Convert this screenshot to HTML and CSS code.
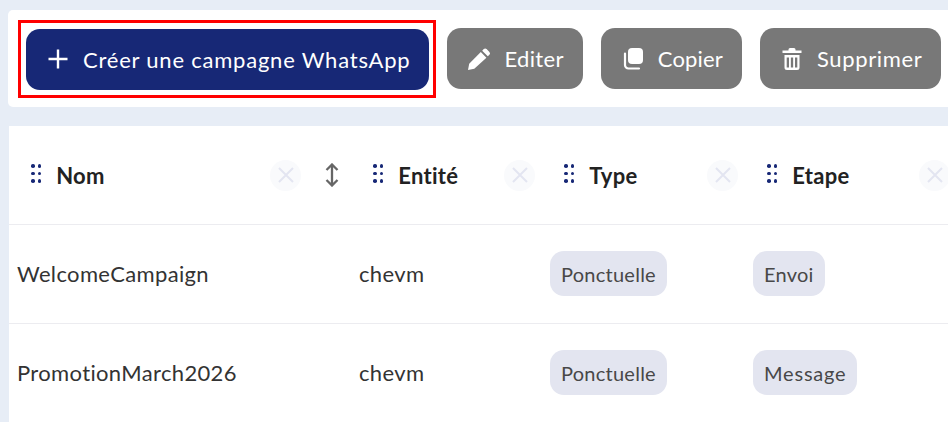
FILE: index.html
```html
<!DOCTYPE html>
<html lang="fr">
<head>
	<meta charset="UTF-8">
	<title>Campagnes WhatsApp</title>

	<link rel="stylesheet" href="styles.css">
</head>
<body>

	<div class="toolbar">
		<div class="highlight">
			<button class="btn btn-primary">
				<svg class="icon" viewBox="0 0 24 24"><path d="M12 2.500v19M2.500 12h19" fill="none" stroke="#fff" stroke-width="2.400"/></svg>
				Créer une campagne WhatsApp
			</button>
		</div>
		<button class="btn btn-edit">
			<svg class="icon" viewBox="0 0 24 24"><path d="M1 23l1.200-6.300L13.800 5.100l5.600 5.600L7.300 21.800zM15.200 3.700l1.600-1.600a2 2 0 0 1 2.800 0l2.800 2.800a2 2 0 0 1 0 2.800l-1.600 1.600z" fill="#fff"/></svg>
			Editer
		</button>
		<button class="btn btn-copy">
			<svg class="icon" viewBox="0 0 24 24"><path d="M11 1h7a4 4 0 0 1 4 4v8a4 4 0 0 1-4 4h-7a4 4 0 0 1-4-4V5a4 4 0 0 1 4-4z" fill="#fff"/><path d="M4 6.500V18a3.500 3.500 0 0 0 3.500 3.500H18" fill="none" stroke="#fff" stroke-width="2.200" stroke-linecap="round"/></svg>
			Copier
		</button>
		<button class="btn btn-delete">
			<svg class="icon" viewBox="0 0 24 24"><path d="M2.500 3.500h6V2.500a1.500 1.500 0 0 1 1.500-1.500h4a1.500 1.500 0 0 1 1.500 1.500v1h6v2.500h-19zM4.500 8h15v12.500a2.500 2.500 0 0 1-2.500 2.500H7a2.500 2.500 0 0 1-2.500-2.500zM6.700 10.500v10h2.300v-10zm4.150 0v10h2.300v-10zm4.150 0v10h2.300v-10z" fill="#fff" fill-rule="evenodd"/></svg>
			Supprimer
		</button>
	</div>

	<div class="table">
		<div class="row">
			<div class="th">
				<span class="grip"><i></i><i></i><i></i><i></i><i></i><i></i></span>
				<span class="th-label">Nom</span>
				<span class="close close-nom"><svg viewBox="0 0 16 16"><path d="M1 1l14 14M15 1L1 15" stroke="#e3e5f1" stroke-width="2" fill="none"/></svg></span>
				<svg class="sort" viewBox="0 0 14 24"><path d="M7 1.500v21M1.500 7 7 1.500 12.500 7M1.500 17 7 22.500 12.500 17" fill="none" stroke="#666" stroke-width="2.300"/></svg>
			</div>
			<div class="th">
				<span class="grip"><i></i><i></i><i></i><i></i><i></i><i></i></span>
				<span class="th-label">Entité</span>
				<span class="close"><svg viewBox="0 0 16 16"><path d="M1 1l14 14M15 1L1 15" stroke="#e3e5f1" stroke-width="2" fill="none"/></svg></span>
			</div>
			<div class="th">
				<span class="grip"><i></i><i></i><i></i><i></i><i></i><i></i></span>
				<span class="th-label">Type</span>
				<span class="close"><svg viewBox="0 0 16 16"><path d="M1 1l14 14M15 1L1 15" stroke="#e3e5f1" stroke-width="2" fill="none"/></svg></span>
			</div>
			<div class="th">
				<span class="grip"><i></i><i></i><i></i><i></i><i></i><i></i></span>
				<span class="th-label">Etape</span>
				<span class="close"><svg viewBox="0 0 16 16"><path d="M1 1l14 14M15 1L1 15" stroke="#e3e5f1" stroke-width="2" fill="none"/></svg></span>
			</div>
		</div>
		<div class="row">
			<div class="td">WelcomeCampaign</div>
			<div class="td">chevm</div>
			<div class="td"><span class="badge">Ponctuelle</span></div>
			<div class="td"><span class="badge">Envoi</span></div>
		</div>
		<div class="row">
			<div class="td">PromotionMarch2026</div>
			<div class="td">chevm</div>
			<div class="td"><span class="badge">Ponctuelle</span></div>
			<div class="td"><span class="badge badge-wide">Message</span></div>
		</div>
	</div>

</body>
</html>
```

FILE: styles.css
```css
html, body {
	height: 100%;
	overflow: hidden;
}

body {
	font-family: Lato, "Open Sans", sans-serif;
	background: #e7edf6;
	margin: 0;
	padding: 10px 0 0 8px;
	box-sizing: border-box;
	color: #2b2b2b;
}

.toolbar {
	display: flex;
	align-items: center;
	gap: 18px;
	width: 960px;
	height: 97px;
	padding-left: 10px;
	box-sizing: border-box;
	background: #fff;
	border-radius: 5px 0 0 5px;
	margin-bottom: 19px;
}

.highlight {
	display: flex;
	padding: 6px 4px 5px 5px;
	border: 3px solid #f00;
	margin-right: -7px;
}

.btn {
	display: flex;
	align-items: center;
	gap: 13px;
	height: 61px;
	padding: 0 19px 0 20px;
	border: 0;
	border-radius: 14px;
	background: #787878;
	color: #fff;
	font-family: inherit;
	font-size: 22px;
	white-space: nowrap;
}

.btn-primary {
	background: #172876;
	letter-spacing: .78px;
}

.btn-edit {
	letter-spacing: .35px;
}

.btn-copy {
	letter-spacing: .15px;
}

.btn-delete {
	letter-spacing: .65px;
}

.icon {
	width: 24px;
	height: 24px;
	flex: none;
}

.table {
	width: 960px;
	margin-left: 1px;
	background: #fff;
}

.row {
	display: grid;
	grid-template-columns: 342px 191px 203px 212px;
	height: 99px;
	border-bottom: 1px solid #ececf0;
	box-sizing: border-box;
}

.th {
	display: flex;
	align-items: center;
	padding: 0 7px 0 22px;
}

.grip {
	display: grid;
	grid-template-columns: 3.500px 3.500px;
	gap: 4px 3.200px;
	margin: 0 15px 3px 0;
}

.grip i {
	width: 3.500px;
	height: 3.500px;
	border-radius: 50%;
	background: #172876;
}

.th-label {
	font-size: 22px;
	font-weight: 700;
	letter-spacing: .3px;
	color: #222;
}

.close {
	display: flex;
	align-items: center;
	justify-content: center;
	width: 31px;
	height: 31px;
	margin-left: auto;
	border-radius: 50%;
	background: #f9fafc;
}

.close svg {
	width: 16px;
	height: 16px;
}

.close-nom {
	margin-right: 24px;
}

.sort {
	width: 14px;
	height: 24px;
	margin-right: 5px;
	flex: none;
}

.td {
	display: flex;
	align-items: center;
	padding: 0 0 1px 8px;
	font-size: 22px;
	letter-spacing: .35px;
	color: #333;
}

.badge {
	display: flex;
	align-items: center;
	height: 45px;
	padding: 0 11px;
	border-radius: 14px;
	background: #e3e5f0;
	color: #484848;
	font-size: 20px;
	letter-spacing: .25px;
}

.badge-wide {
	letter-spacing: .8px;
}
```
